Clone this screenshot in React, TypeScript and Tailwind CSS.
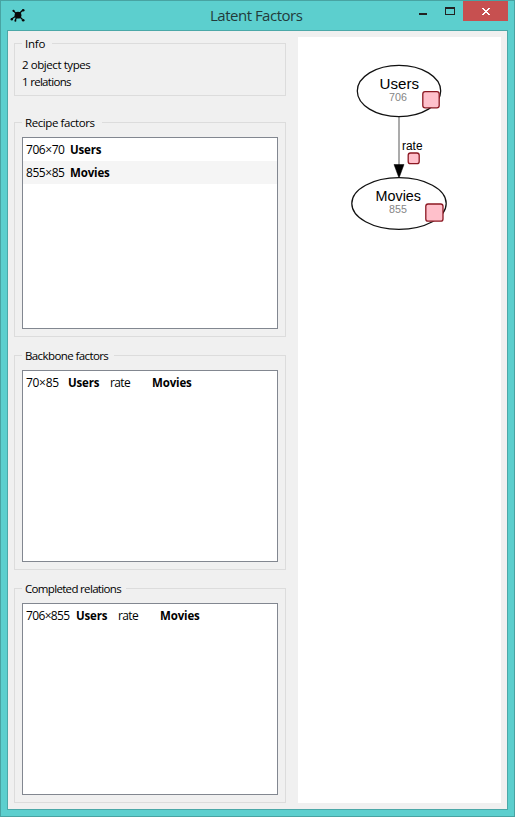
import type { ReactNode } from "react";

type Cell = { text: string; width: string; bold?: boolean; spacing: string };

function Group({ title, titleClass, className, children }: { title: string; titleClass: string; className: string; children: ReactNode }) {
  return (
    <fieldset className={`relative w-[272px] border border-[#dcdcdc] ${className}`}>
      <div className={`absolute -top-[9px] left-[7px] h-[17px] whitespace-nowrap bg-[#f0f0f0] pl-[3px] text-[11.5px] leading-[17px] ${titleClass}`}>
        {title}
      </div>
      {children}
    </fieldset>
  );
}

function List({ rows }: { rows: Cell[][] }) {
  return (
    <div className="mx-[7px] mt-[14px] h-[192px] border border-[#828790] bg-white">
      {rows.map((row, i) => (
        <div key={i} className={`flex h-[23px] items-center pl-[3px] text-[12px] leading-[23px] ${i % 2 ? "bg-[#f5f5f5]" : ""}`}>
          {row.map((c, j) => (
            <span key={j} className={`shrink-0 whitespace-nowrap ${c.width} ${c.spacing} ${c.bold ? "text-[11.5px] font-bold" : ""}`}>
              {c.text}
            </span>
          ))}
        </div>
      ))}
    </div>
  );
}

const dim = "tracking-[-0.65px]";
const name = "tracking-[-0.15px]";

export default function App() {
  return (
    <div className="flex h-[817px] w-[515px] flex-col border border-[#48a3a2] bg-[#5ccfce] font-['Open_Sans','Noto_Sans',sans-serif] text-black">
      <header className="flex h-[29px] shrink-0">
        <svg className="ml-[9px] mt-[7px] h-4 w-4" viewBox="0 0 16 16">
          <g stroke="#080808" strokeWidth="1.3" fill="#080808">
            <path d="M7.5 7 3.3 2.6M7.5 7 13 2M7.5 7 1.5 11M8 7 12.5 11.5M7 8 5.3 12.2" />
            <circle cx="8" cy="7.2" r="3.4" stroke="none" />
            <circle cx="3.5" cy="2.8" r="1.1" stroke="none" />
            <circle cx="13.2" cy="2.2" r="1.3" stroke="none" />
            <circle cx="1.8" cy="11.2" r="1.2" stroke="none" />
            <circle cx="13.2" cy="12.2" r="1.3" stroke="none" />
            <circle cx="5.4" cy="12.8" r="1" stroke="none" />
          </g>
        </svg>
        <h1 className="ml-[184px] w-[190px] whitespace-nowrap text-[15px] leading-[29px] tracking-[-0.5px] text-[#233b3b]">Latent Factors</h1>
        <svg className="ml-[14px] h-5 w-[60px]" viewBox="414 1 60 20" shapeRendering="crispEdges">
          <rect x="419" y="13" width="8" height="2" fill="#222" />
          <path d="M445 7h10v8h-10zM446 9v5h8V9z" fill="#222" fillRule="evenodd" />
        </svg>
        <div className="-ml-[11px] flex h-5 w-[45px] items-center justify-center bg-[#c75050]">
          <svg className="mt-px h-[7px] w-2" viewBox="0 0 8 7" fill="white" shapeRendering="crispEdges">
            <path d="M0 0h2v1h1v1h2V1h1V0h2v1H7v1H6v1H5v1h1v1h1v1h1v1H6V6H5V5H3v1H2v1H0V6h1V5h1V4h1V3H2V2H1V1H0z" />
          </svg>
        </div>
      </header>
      <main className="ml-[6px] flex h-[780px] w-[501px] gap-3 border border-[#4ba8a8] bg-[#f0f0f0] p-[6px]">
        <div className="flex flex-col">
          <Group title="Info" titleClass="w-[30px] tracking-[-0.2px]" className="mt-[6px] h-[53px]">
            <div className="pl-[7px] pt-[12px] text-[11.5px] leading-[17px]">
              <p className="tracking-[-0.42px]">2 object types</p>
              <p className="tracking-[-0.7px]">1 relations</p>
            </div>
          </Group>
          <Group title="Recipe factors" titleClass="w-[80px] tracking-[-0.42px]" className="mt-[26px] h-[215px]">
            <List
              rows={[
                [{ text: "706×70", width: "w-[44px]", spacing: "tracking-[-0.45px]" }, { text: "Users", width: "w-[60px]", bold: true, spacing: name }],
                [{ text: "855×85", width: "w-[44px]", spacing: "tracking-[-0.45px]" }, { text: "Movies", width: "w-[60px]", bold: true, spacing: name }],
              ]}
            />
          </Group>
          <Group title="Backbone factors" titleClass="w-[92px] tracking-[-0.6px]" className="mt-[18px] h-[215px]">
            <List
              rows={[[
                { text: "70×85", width: "w-[42px]", spacing: "tracking-[-0.3px]" },
                { text: "Users", width: "w-[42px]", bold: true, spacing: name },
                { text: "rate", width: "w-[42px]", spacing: dim },
                { text: "Movies", width: "w-[60px]", bold: true, spacing: name },
              ]]}
            />
          </Group>
          <Group title="Completed relations" titleClass="w-[104px] tracking-[-0.67px]" className="mt-[18px] h-[215px]">
            <List
              rows={[[
                { text: "706×855", width: "w-[50px]", spacing: "tracking-[-0.65px]" },
                { text: "Users", width: "w-[42px]", bold: true, spacing: name },
                { text: "rate", width: "w-[42px]", spacing: dim },
                { text: "Movies", width: "w-[60px]", bold: true, spacing: name },
              ]]}
            />
          </Group>
        </div>
        <svg className="h-[766px] w-[203px] shrink-0 bg-white font-['Liberation_Sans',Arial,sans-serif]" viewBox="298 37 203 766">
          <path d="M399 117v50" stroke="#969696" strokeWidth="1.6" />
          <path d="M394 164.5h10l-5 13.5z" fill="black" stroke="black" strokeWidth=".5" />
          <g fill="white" stroke="#111" strokeWidth="1.25">
            <ellipse cx="399" cy="91" rx="41.7" ry="25.6" />
            <ellipse cx="399" cy="203.5" rx="47.2" ry="25.8" />
          </g>
          <g fill="#ffc0cb" stroke="#8c1822" strokeWidth="1.3">
            <rect x="422.8" y="91.6" width="16.4" height="16.2" rx="2.3" />
            <rect x="408.2" y="153" width="11" height="10.7" rx="2.3" />
            <rect x="425.8" y="204" width="17.2" height="17.2" rx="2.3" />
          </g>
          <g fill="black">
            <text x="379.5" y="89" fontSize="15" textLength="39.5" lengthAdjust="spacingAndGlyphs">Users</text>
            <text x="375.5" y="201" fontSize="15" textLength="45.5" lengthAdjust="spacingAndGlyphs">Movies</text>
            <text x="402" y="150" fontSize="12" textLength="20.5" lengthAdjust="spacingAndGlyphs">rate</text>
          </g>
          <g fill="#858585" fontSize="10.7">
            <text x="389" y="101" textLength="18">706</text>
            <text x="389" y="213" textLength="18">855</text>
          </g>
        </svg>
      </main>
    </div>
  );
}
